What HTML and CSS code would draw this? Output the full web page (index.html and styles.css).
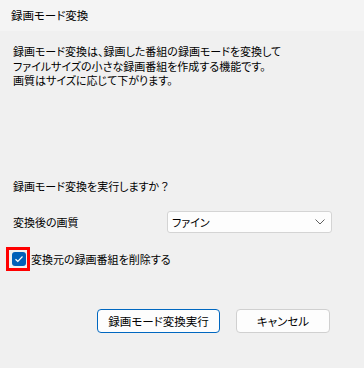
FILE: index.html
```html
<!DOCTYPE html>
<html lang="ja">
<head>
    <meta charset="UTF-8">
    <title>録画モード変換</title>
    <link rel="stylesheet" href="styles.css">
</head>
<body>
    <div class="titlebar">録画モード変換</div>

    <div class="content">
        <p class="desc">
            録画モード変換は、録画した番組の録画モードを変換して<br>
            ファイルサイズの小さな録画番組を作成する機能です。<br>
            画質はサイズに応じて下がります。
        </p>

        <p class="question">録画モード変換を実行しますか<span class="wide">？</span></p>

        <div class="quality-row">
            <span class="label">変換後の画質</span>
            <div class="select">
                <span>ファイン</span>
                <svg width="10" height="6" viewBox="0 0 10 6"><path d="M0.5 0.5 L5 5 L9.5 0.5" fill="none" stroke="#606060" stroke-width="1"/></svg>
            </div>
        </div>

        <div class="check-row">
            <span class="mark">
                <span class="box">
                    <svg width="10" height="8" viewBox="0 0 10 8"><path d="M1.5 4.2 L3.8 6.3 L8.5 1.5" fill="none" stroke="#fff" stroke-width="1.2"/></svg>
                </span>
            </span>
            <span class="check-label">変換元の録画番組を削除する</span>
        </div>

        <div class="buttons">
            <button class="btn primary">録画モード変換実行</button>
            <button class="btn">キャンセル</button>
        </div>
    </div>
</body>
</html>
```

FILE: styles.css
```css
body {
    margin: 0;
    width: 364px;
    height: 368px;
    background-color: #f0f0f0;
    color: #000;
    font-family: "Noto Sans CJK JP", "Noto Sans", sans-serif;
    font-size: 11px;
    font-feature-settings: "palt";
    overflow: hidden;
}

.titlebar {
    height: 31px;
    line-height: 31px;
    padding-left: 11px;
    font-size: 11.5px;
    background-color: #f4f4f4;
    box-sizing: border-box;
}

.content {
    padding: 13px 13px 0 13px;
}

p {
    margin: 0;
}

.desc {
    line-height: 14.5px;
}

.question {
    margin-top: 91px;
    line-height: 15px;
}

.wide {
    font-feature-settings: normal;
}

.quality-row {
    display: flex;
    align-items: center;
    margin-top: 17px;
}

.label {
    width: 154px;
}

.select {
    width: 165px;
    height: 22px;
    box-sizing: border-box;
    background-color: #fdfdfd;
    border: 1px solid #d4d4d4;
    border-radius: 3px;
    display: flex;
    align-items: center;
    justify-content: space-between;
    padding: 0 6px 0 4px;
}

.check-row {
    display: flex;
    align-items: center;
    margin-top: 14px;
    margin-left: -7px;
}

.mark {
    display: inline-flex;
    border: 3px solid #ff0000;
    padding: 2px 1px 2px 3px;
}

.box {
    width: 14px;
    height: 14px;
    border-radius: 3px;
    background-color: #005fb8;
    display: flex;
    align-items: center;
    justify-content: center;
}

.check-label {
    margin-left: 1px;
}

.buttons {
    display: flex;
    justify-content: flex-end;
    gap: 16px;
    margin-top: 38px;
    padding-right: 21px;
}

.btn {
    height: 24px;
    font-family: inherit;
    font-size: 11.5px;
    font-feature-settings: "palt";
    color: #000;
    background-color: #fdfdfd;
    border: 1px solid #d0d0d0;
    border-radius: 4px;
    padding: 0;
}

.btn.primary {
    width: 123px;
    border-color: #0067c0;
}

.btn:not(.primary) {
    width: 94px;
}
```
